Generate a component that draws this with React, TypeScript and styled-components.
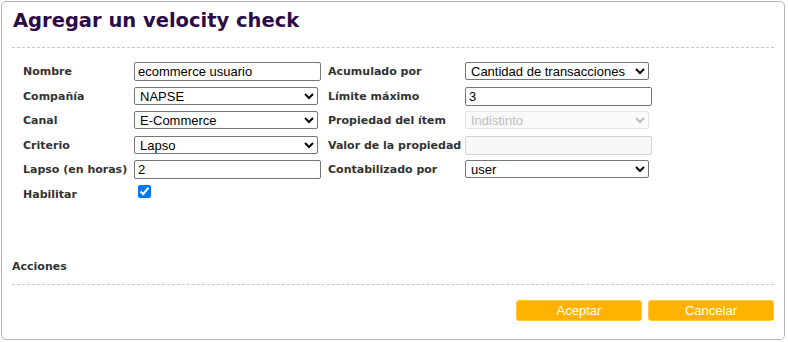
import styled, { createGlobalStyle } from "styled-components";

const GlobalStyle = createGlobalStyle`
  body {
    margin: 0;
    background: #ffffff;
    font-family: "DejaVu Sans", Verdana, sans-serif;
  }
`;

const LEFT_FIELDS = [
  { label: "Nombre", kind: "text", value: "ecommerce usuario" },
  { label: "Compañía", kind: "select", value: "NAPSE" },
  { label: "Canal", kind: "select", value: "E-Commerce" },
  { label: "Criterio", kind: "select", value: "Lapso" },
  { label: "Lapso (en horas)", kind: "text", value: "2" },
  { label: "Habilitar", kind: "check", value: "" },
];

const RIGHT_FIELDS = [
  { label: "Acumulado por", kind: "select", value: "Cantidad de transacciones" },
  { label: "Límite máximo", kind: "text", value: "3" },
  { label: "Propiedad del ítem", kind: "select", value: "Indistinto", disabled: true },
  { label: "Valor de la propiedad", kind: "text", value: "", disabled: true },
  { label: "Contabilizado por", kind: "select", value: "user" },
];

type Field = { label: string; kind: string; value: string; disabled?: boolean };

const Control = ({ field }: { field: Field }) => {
  if (field.kind === "check") {
    return <Check type="checkbox" defaultChecked />;
  }
  if (field.kind === "select") {
    return (
      <Select defaultValue={field.value} disabled={field.disabled}>
        <option>{field.value}</option>
      </Select>
    );
  }
  return <TextInput type="text" defaultValue={field.value} disabled={field.disabled} />;
};

const App = function App() {
  return (
    <>
      <GlobalStyle />
      <Style.Panel>
        <Style.Title>Agregar un velocity check</Style.Title>
        <Style.Divider />
        <Style.Form>
          <Style.Column $labelWidth={111}>
            {LEFT_FIELDS.map((field) => (
              <Style.Row key={field.label}>
                <Style.Label>{field.label}</Style.Label>
                <Control field={field} />
              </Style.Row>
            ))}
          </Style.Column>
          <Style.Column $labelWidth={137}>
            {RIGHT_FIELDS.map((field) => (
              <Style.Row key={field.label}>
                <Style.Label>{field.label}</Style.Label>
                <Control field={field} />
              </Style.Row>
            ))}
          </Style.Column>
        </Style.Form>
        <Style.SectionTitle>Acciones</Style.SectionTitle>
        <Style.Divider />
        <Style.Actions>
          <Style.Button>Aceptar</Style.Button>
          <Style.Button>Cancelar</Style.Button>
        </Style.Actions>
      </Style.Panel>
    </>
  );
};

export default App;

const TextInput = styled.input`
  box-sizing: border-box;
  width: 187px;
  height: 19px;
  margin: 0;
  padding: 0 3px;
  border: 1px solid #767676;
  border-radius: 2px;
  font-family: "Liberation Sans", Arial, sans-serif;
  font-size: 13px;
  color: #000;
  background: #fff;
  &:disabled {
    border-color: #d4d4d4;
    background: #f8f8f8;
  }
`;

const Select = styled.select`
  box-sizing: border-box;
  width: 184px;
  height: 18px;
  margin: 0;
  padding: 0 1px;
  border: 1px solid #767676;
  border-radius: 2px;
  font-family: "Liberation Sans", Arial, sans-serif;
  font-size: 13px;
  color: #000;
  background: #fff;
  &:disabled {
    border-color: #d9d9d9;
    color: #a0a0a0;
    background: #f8f8f8;
  }
`;

const Check = styled.input`
  width: 13px;
  height: 13px;
  margin: 0 0 0 4px;
  accent-color: #0075ff;
`;

const Style = {
  Panel: styled.div`
    box-sizing: border-box;
    width: 784px;
    height: 339px;
    margin: 1px;
    padding: 0 10px;
    border: 1px solid #b5b5b5;
    border-radius: 5px;
  `,
  Title: styled.h1`
    margin: 0;
    padding: 7px 0 0 1px;
    height: 45px;
    box-sizing: border-box;
    font-size: 19.5px;
    font-weight: bold;
    color: #2b0b48;
  `,
  Divider: styled.div`
    border-top: 1px dashed #c8c8c8;
  `,
  Form: styled.div`
    display: flex;
    gap: 7px;
    padding: 14px 0 0 11px;
    height: 200px;
    box-sizing: border-box;
  `,
  Column: styled.div<{ $labelWidth: number }>`
    display: grid;
    grid-template-columns: ${(p) => p.$labelWidth}px 187px;
    grid-auto-rows: 24.5px;
    align-items: start;
  `,
  Row: styled.div`
    display: contents;
  `,
  Label: styled.span`
    font-size: 11px;
    font-weight: bold;
    color: #333333;
    line-height: 19px;
    white-space: nowrap;
  `,
  SectionTitle: styled.div`
    margin-top: 12px;
    padding-bottom: 11px;
    font-size: 11px;
    line-height: 13px;
    font-weight: bold;
    color: #333333;
  `,
  Actions: styled.div`
    display: flex;
    justify-content: flex-end;
    gap: 6px;
    padding: 15px 0 0;
  `,
  Button: styled.button`
    width: 126px;
    height: 21px;
    border: 1px solid #ffc640;
    border-radius: 3px;
    background: #ffb300;
    color: #ffffff;
    font-family: "Liberation Sans", Arial, sans-serif;
    font-size: 13px;
  `,
};
